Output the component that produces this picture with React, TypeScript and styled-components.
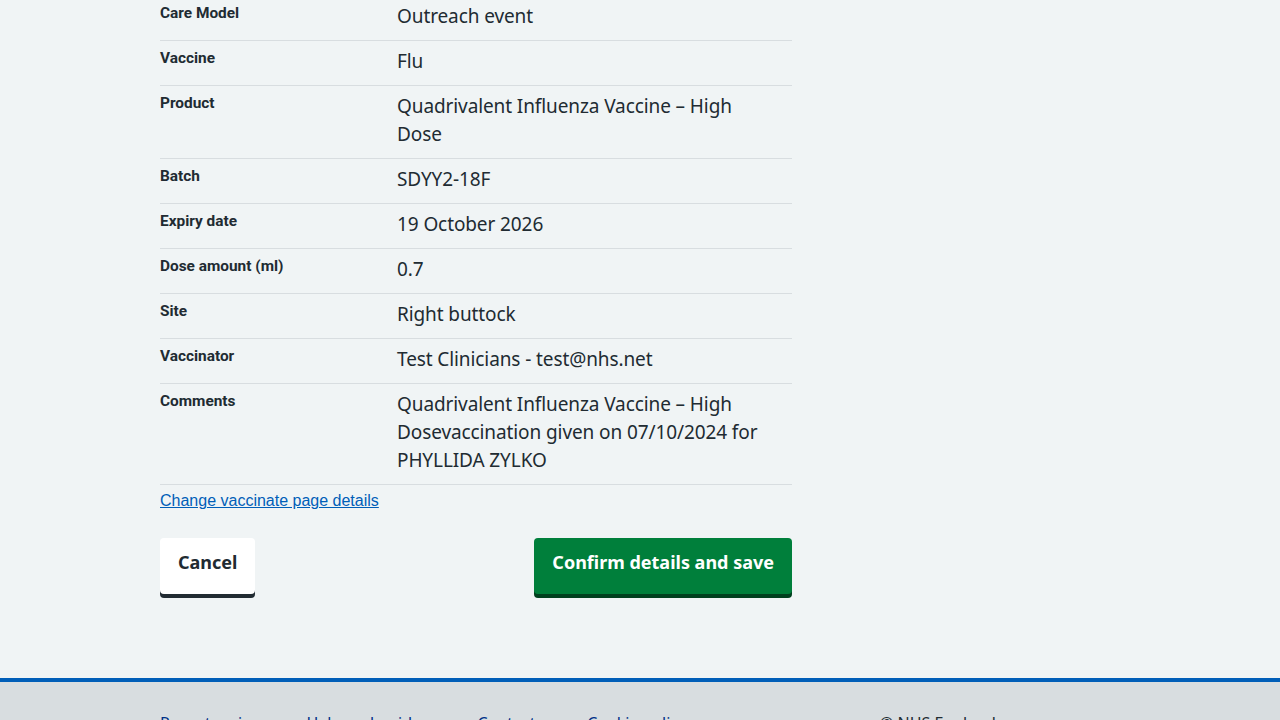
import * as React from "react";
import styled, { createGlobalStyle } from "styled-components";

const GlobalStyle = createGlobalStyle`
  html, body {
    margin: 0;
    padding: 0;
    background: #f0f4f5;
    color: #212b32;
    font-family: "Noto Sans", "Open Sans", sans-serif;
  }
`;

const rows: { label: string; value: string }[] = [
  { label: "Care Model", value: "Outreach event" },
  { label: "Vaccine", value: "Flu" },
  { label: "Product", value: "Quadrivalent Influenza Vaccine – High Dose" },
  { label: "Batch", value: "SDYY2-18F" },
  { label: "Expiry date", value: "19 October 2026" },
  { label: "Dose amount (ml)", value: "0.7" },
  { label: "Site", value: "Right buttock" },
  { label: "Vaccinator", value: "Test Clinicians - test@nhs.net" },
  {
    label: "Comments",
    value:
      "Quadrivalent Influenza Vaccine – High Dosevaccination given on 07/10/2024 for PHYLLIDA ZYLKO",
  },
];

const footerLinks = ["Report an issue", "Help and guidance", "Contact us", "Cookie policy"];

const App = () => {
  return (
    <>
      <GlobalStyle />
      <Page>
        <Main>
          <SummaryList>
            {rows.map((r) => (
              <Row key={r.label}>
                <Key>{r.label}</Key>
                <Value>{r.value}</Value>
              </Row>
            ))}
          </SummaryList>
          <ChangeLink href="#">Change vaccinate page details</ChangeLink>
          <ButtonGroup>
            <Button variant="secondary">Cancel</Button>
            <Button variant="primary">Confirm details and save</Button>
          </ButtonGroup>
        </Main>
        <Footer>
          <FooterInner>
            <FooterList>
              {footerLinks.map((l) => (
                <li key={l}>
                  <FooterLink href="#">{l}</FooterLink>
                </li>
              ))}
            </FooterList>
            <Copyright>© NHS England</Copyright>
          </FooterInner>
        </Footer>
      </Page>
    </>
  );
};

export default App;

/********************************************************************************************************/

const Page = styled.div`
  display: flex;
  flex-direction: column;
`;

const Main = styled.main`
  width: 632px;
  margin: -4px 0 0 160px;
  padding-bottom: 84px;
`;

const SummaryList = styled.dl`
  margin: 0;
`;

const Row = styled.div`
  display: grid;
  grid-template-columns: 237px 1fr;
  border-bottom: 1px solid #d8dde0;
  padding: 6px 24px 10px 0;
`;

const Key = styled.dt`
  font-family: Roboto, "Noto Sans", sans-serif;
  font-weight: 700;
  font-size: 15.4px;
  line-height: 24px;
  margin-top: -1px;
`;

const Value = styled.dd`
  margin: 0;
  font-size: 19px;
  line-height: 28px;
  letter-spacing: -0.1px;
`;

const ChangeLink = styled.a`
  display: block;
  margin-top: 6px;
  font-family: "Liberation Sans", Arial, sans-serif;
  font-size: 16px;
  line-height: 20px;
  color: #005eb8;
  text-decoration: underline;
  width: max-content;
`;

const ButtonGroup = styled.div`
  display: flex;
  justify-content: space-between;
  align-items: flex-start;
  margin-top: 27px;
`;

const Button = styled.button<{ variant: "primary" | "secondary" }>`
  font-family: "Noto Sans", sans-serif;
  font-weight: 700;
  font-size: 18px;
  line-height: 24px;
  padding: 12px 18px 20px;
  height: 56px;
  border: 0;
  border-radius: 4px;
  cursor: pointer;
  background: ${(p) => (p.variant === "primary" ? "#007f3b" : "#ffffff")};
  color: ${(p) => (p.variant === "primary" ? "#ffffff" : "#212b32")};
  box-shadow: 0 4px 0 ${(p) => (p.variant === "primary" ? "#00401e" : "#212b32")};
`;

const Footer = styled.footer`
  background: #d8dde0;
  border-top: 4px solid #005eb8;
`;

const FooterInner = styled.div`
  width: 960px;
  margin-left: 160px;
  display: flex;
  padding-top: 29px;
  padding-bottom: 24px;
`;

const FooterList = styled.ul`
  list-style: none;
  margin: 0;
  padding: 0;
  display: flex;
  gap: 30px;
  width: 720px;
`;

const FooterLink = styled.a`
  font-size: 16px;
  line-height: 24px;
  color: #003087;
  text-decoration: none;
`;

const Copyright = styled.p`
  margin: 0;
  font-size: 16px;
  line-height: 24px;
`;
